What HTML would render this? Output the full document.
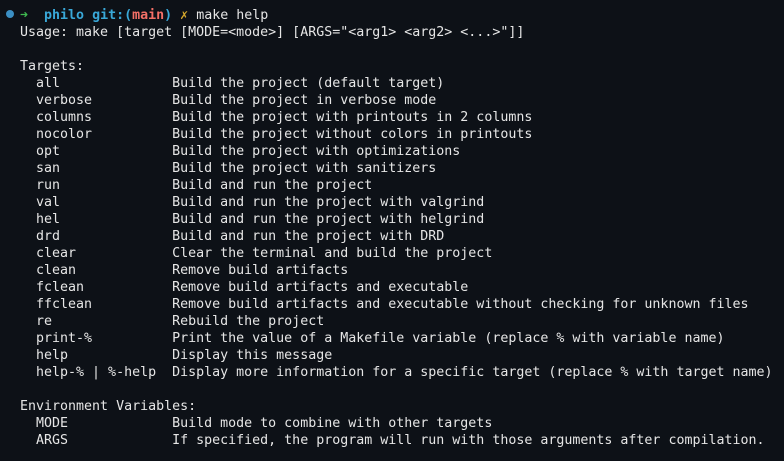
<html><head><style>
body{margin:0;background:#0d1117;width:784px;height:461px;overflow:hidden}
pre{margin:0;position:absolute;left:20px;top:7px;font-family:"DejaVu Sans Mono","Liberation Mono",monospace;font-size:13.3px;line-height:17px;color:#e6e6e6}
.dot{position:absolute;left:6px;top:10px;width:8px;height:8px;border-radius:50%;background:#3b8fc4}
.g{color:#3fb950;font-weight:bold}.c{color:#39a8d8;font-weight:bold}.r{color:#f47067;font-weight:bold}.y{color:#d4a72c}
</style></head><body><div class="dot"></div><pre><span class="g">➜</span>  <span class="c">philo</span> <span class="c">git:(</span><span class="r">main</span><span class="c">)</span> <span class="y">✗</span> make help
Usage: make [target [MODE=&lt;mode&gt;] [ARGS="&lt;arg1&gt; &lt;arg2&gt; &lt;...&gt;"]]

Targets:
  all              Build the project (default target)
  verbose          Build the project in verbose mode
  columns          Build the project with printouts in 2 columns
  nocolor          Build the project without colors in printouts
  opt              Build the project with optimizations
  san              Build the project with sanitizers
  run              Build and run the project
  val              Build and run the project with valgrind
  hel              Build and run the project with helgrind
  drd              Build and run the project with DRD
  clear            Clear the terminal and build the project
  clean            Remove build artifacts
  fclean           Remove build artifacts and executable
  ffclean          Remove build artifacts and executable without checking for unknown files
  re               Rebuild the project
  print-%          Print the value of a Makefile variable (replace % with variable name)
  help             Display this message
  help-% | %-help  Display more information for a specific target (replace % with target name)

Environment Variables:
  MODE             Build mode to combine with other targets
  ARGS             If specified, the program will run with those arguments after compilation.</pre></body></html>
